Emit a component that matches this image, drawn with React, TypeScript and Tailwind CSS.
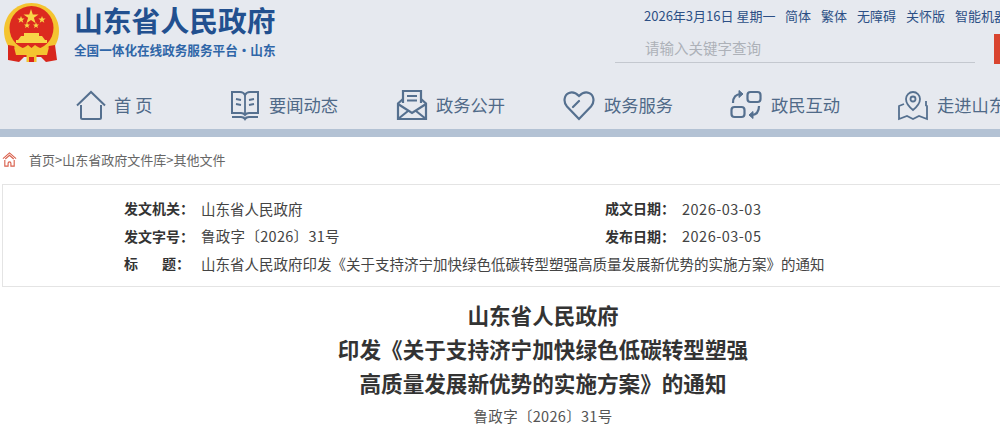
import React from 'react';

const font = { fontFamily: '"Noto Sans CJK SC", "Liberation Sans", sans-serif' };

const Emblem = () => (
  <svg viewBox="0 0 58 62" className="w-[58px] h-[62px]">
    <path d="M28.500 1C13 1 1 13 1 29c0 9 4 17 10 22h35c6-5 10-13 10-22C56 13 44 1 28.500 1z" fill="#f4c430" />
    <circle cx="28.500" cy="26" r="22" fill="#dc2a1f" />
    <polygon points="28,7 29.800,12.400 35.500,12.400 30.900,15.800 32.600,21.200 28,17.900 23.400,21.200 25.100,15.800 20.500,12.400 26.200,12.400" fill="#f8d648" />
    <polygon points="18,14 19,16.600 21.600,16.600 19.500,18.200 20.300,20.800 18,19.200 15.700,20.800 16.500,18.200 14.400,16.600 17,16.600" fill="#f8d648" />
    <polygon points="39,14 40,16.600 42.600,16.600 40.500,18.200 41.300,20.800 39,19.200 36.700,20.800 37.500,18.200 35.400,16.600 38,16.600" fill="#f8d648" />
    <polygon points="24,20.500 24.900,22.600 27,22.600 25.300,23.900 26,26 24,24.700 22,26 22.700,23.900 21,22.600 23.100,22.600" fill="#f8d648" />
    <polygon points="33,20.500 33.900,22.600 36,22.600 34.300,23.900 35,26 33,24.700 31,26 31.700,23.900 30,22.600 32.100,22.600" fill="#f8d648" />
    <path d="M21 31h15v3h3l3 4H15l3-4h3z" fill="#f8d648" />
    <rect x="13" y="38" width="31" height="3" fill="#f8d648" />
    <path d="M5 43l6 1 2 3h31l2-3 6-1 2 15-11 2-5-5H21l-5 5-11-2z" fill="#d8261c" />
    <path d="M11 45c4 3 11 1 14-2l3.500 3 3.500-3c3 3 10 5 14 2l-2 8H13z" fill="#f4c430" />
    <rect x="23.500" y="53" width="10" height="7" fill="#f4c430" />
    <rect x="26" y="55" width="5" height="5" fill="#d8261c" />
  </svg>
);

const cls = 'w-[32px] h-[32px] text-[#55708f]';

const HomeIcon = () => (
  <svg viewBox="0 0 32 32" fill="none" stroke="currentColor" strokeWidth="2" className={cls}>
    <path d="M2 16.500L16 3l14 13.500" />
    <path d="M6 16v12.500a1.500 1.500 0 0 0 1.500 1.500h17a1.500 1.500 0 0 0 1.500-1.500V16" />
  </svg>
);

const BookIcon = () => (
  <svg viewBox="0 0 32 32" fill="none" stroke="currentColor" strokeWidth="2" className={cls}>
    <path d="M3 3h8c2.500 0 4 1 5 3 1-2 2.500-3 5-3h8v21h-9c-2 0-3 .5-4 2-1-1.500-2-2-4-2H3z" />
    <path d="M16 6v19M7 10l5 1M7 15l5 1M25 10l-5 1M25 15l-5 1" strokeWidth="1.800" />
    <path d="M3 28h9c2 0 3 .5 4 2 1-1.500 2-2 4-2h9" strokeWidth="2.200" />
  </svg>
);

const MailIcon = () => (
  <svg viewBox="0 0 32 32" fill="none" stroke="currentColor" strokeWidth="2.200" className={cls}>
    <path d="M7 14V2h18v12M11 7h10M11 11.500h10" />
    <path d="M7 10l-5 4.500V30h28V14.500L25 10" />
    <path d="M2 15l14 9 14-9M2 30l10-8M30 30l-10-8" />
  </svg>
);

const HeartIcon = () => (
  <svg viewBox="0 0 32 32" fill="none" stroke="currentColor" strokeWidth="2.200" strokeLinecap="round" className={cls}>
    <path d="M10 18l6-6M16 30L4 17.500C0 13 1 6 6 4c4-1.500 7 0 10 3 3-3 6-4.500 10-3 5 2 6 9 2 13.500L16 30z" />
  </svg>
);

const ExchangeIcon = () => (
  <svg viewBox="0 0 32 32" fill="none" stroke="currentColor" strokeWidth="2.200" className={cls}>
    <rect x="17.500" y="3" width="13" height="10" rx="3" />
    <rect x="1.500" y="18" width="13" height="10" rx="3" />
    <path d="M3 14c0-6 3-9 8-9" />
    <path d="M9 1.500l4 3.500-4 3.500z" fill="currentColor" strokeWidth="1" />
    <path d="M29 17c0 6-3 9-8 9" />
    <path d="M23 22.500l-4 3.500 4 3.500z" fill="currentColor" strokeWidth="1" />
  </svg>
);

const MapIcon = () => (
  <svg viewBox="0 0 32 32" fill="none" stroke="currentColor" strokeWidth="1.800" className={cls}>
    <path d="M16 21c-5-4-7-7-7-11a7 7 0 0 1 14 0c0 4-2 7-7 11z" />
    <circle cx="16" cy="10" r="2.500" />
    <path d="M7 15l-5 2v13l8-3 6 3 6-3 8 3V17l-1-.5V12" />
  </svg>
);

const navItems = [
  { label: '首 页', icon: <HomeIcon />, width: 'w-[154px]', gap: 'ml-[7px]' },
  { label: '要闻动态', icon: <BookIcon />, width: 'w-[167px]', gap: 'ml-[8px]' },
  { label: '政务公开', icon: <MailIcon />, width: 'w-[167px]', gap: 'ml-[8px]' },
  { label: '政务服务', icon: <HeartIcon />, width: 'w-[167px]', gap: 'ml-[9px]' },
  { label: '政民互动', icon: <ExchangeIcon />, width: 'w-[167px]', gap: 'ml-[9px]' },
  { label: '走进山东', icon: <MapIcon />, width: 'w-[167px]', gap: 'ml-[8px]' },
];

const MetaRow = ({ label, value, tracking, justify }: { label: string; value: string; tracking?: string; justify?: boolean }) => (
  <div className="flex items-center h-[27.500px]">
    <span className={`w-[77px] shrink-0 font-bold text-[#333] ${justify ? 'flex justify-between pr-[11px]' : ''}`}>
      {justify ? (<><span>标</span><span>题：</span></>) : label}
    </span>
    <span className={`text-[14.500px] text-[#444] whitespace-nowrap ${tracking ?? ''}`}>{value}</span>
  </div>
);

export default function App() {
  return (
    <div className="w-[1000px] h-[430px] overflow-hidden bg-white" style={font}>
      {/* Header */}
      <div className="w-[1086px] h-[129px] bg-[#e6e9ef]">
        <div className="flex h-[75px]">
          <div className="flex pl-[3px] pt-[2px] w-[640px] shrink-0">
            <Emblem />
            <div className="ml-[13px] -mt-[2px]">
              <div className="text-[28.800px] leading-[40px] font-bold text-[#22508f] whitespace-nowrap">山东省人民政府</div>
              <div className="text-[12.600px] leading-[18px] mt-[1px] font-bold text-[#2f66a8] whitespace-nowrap">全国一体化在线政务服务平台·山东</div>
            </div>
          </div>
          <div className="pt-[6px] w-[446px]">
            <div className="flex pl-[4px] gap-[10px] text-[13px] leading-[20px] text-[#2c4f85] whitespace-nowrap">
              <span className="w-[131px]">2026年3月16日 星期一</span>
              <span>简体</span>
              <span>繁体</span>
              <span>无障碍</span>
              <span>关怀版</span>
              <span>智能机器人</span>
            </div>
            <div className="flex mt-[8px] -ml-[25px]">
              <div className="w-[360px] h-[29px] border-b border-[#c4c8cf] pl-[30px] text-[14.500px] leading-[27px] text-[#adb1b8]">请输入关键字查询</div>
              <div className="w-[36px] h-[30px] ml-[19px] bg-[#d9442f]" />
            </div>
          </div>
        </div>
        <div className="flex h-[54px] pl-[75px]">
          {navItems.map((item) => (
            <div key={item.label} className={`${item.width} shrink-0 flex items-center pt-[6px]`}>
              {item.icon}
              <span className={`${item.gap} text-[17.300px] text-[#506a88] whitespace-nowrap`}>{item.label}</span>
            </div>
          ))}
        </div>
      </div>
      <div className="h-[8px] bg-[#b3c2d4]" />

      {/* Breadcrumb */}
      <div className="flex items-center h-[47px] pl-[2px] pb-[2px] text-[13px] text-[#666]">
        <svg viewBox="0 0 16 16" fill="none" stroke="#d9604c" strokeWidth="1.200" className="w-[15px] h-[15px]">
          <path d="M1 7l7-6 7 6" />
          <path d="M3.500 7.500L8 3.500l4.500 4" />
          <path d="M3 8.500V15h3.500v-3a1.500 1.500 0 0 1 3 0v3H13V8.500" />
        </svg>
        <span className="ml-[12px]">首页&gt;山东省政府文件库&gt;其他文件</span>
      </div>

      {/* Info box */}
      <div className="ml-[2px] w-[1084px] h-[103px] border border-[#e4e4e4] pl-[121px] pt-[10px] text-[14px]">
        <div className="grid grid-cols-[481px_1fr]">
          <MetaRow label="发文机关：" value="山东省人民政府" />
          <MetaRow label="成文日期：" value="2026-03-03" tracking="tracking-[0.5px]" />
          <MetaRow label="发文字号：" value="鲁政字〔2026〕31号" tracking="tracking-[0.3px]" />
          <MetaRow label="发布日期：" value="2026-03-05" tracking="tracking-[0.5px]" />
        </div>
        <MetaRow label="标题" justify value="山东省人民政府印发《关于支持济宁加快绿色低碳转型塑强高质量发展新优势的实施方案》的通知" />
      </div>

      {/* Title */}
      <div className="w-[1086px] pt-[11px] text-center">
        <h1 className="text-[21.600px] leading-[34px] font-bold text-[#333]">
          山东省人民政府<br />
          印发《关于支持济宁加快绿色低碳转型塑强<br />
          高质量发展新优势的实施方案》的通知
        </h1>
        <p className="mt-[4px] text-[14.500px] leading-[24px] tracking-[0.3px] text-[#555]">鲁政字〔2026〕31号</p>
      </div>
    </div>
  );
}
